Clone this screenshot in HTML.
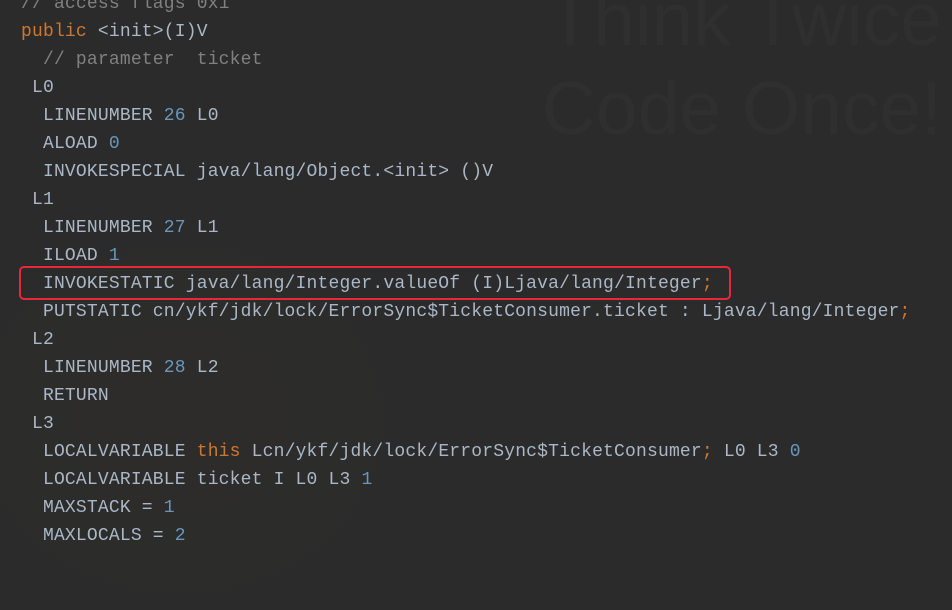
<!DOCTYPE html>
<html><head><meta charset="utf-8"><style>
html,body{margin:0;padding:0;}
body{width:952px;height:569px;background:#2b2b2b;overflow:hidden;position:relative;font-family:"Liberation Mono",monospace;}
.wm{position:absolute;right:10px;font-family:"Liberation Sans",sans-serif;font-size:75px;color:#2f2f2f;white-space:nowrap;line-height:1;}
.vase{position:absolute;left:-40px;top:230px;width:440px;height:380px;border-radius:50%;background:radial-gradient(ellipse at center,#2e2c2b 0%,#2c2c2b 50%,#2b2b2b 72%);}
pre{position:absolute;left:21px;top:-10px;margin:0;font-size:18px;letter-spacing:0.18px;line-height:28px;color:#a9b7c6;font-family:"Liberation Mono",monospace;}
.k{color:#cc7832}.n{color:#6897bb}.c{color:#808080}
.box{position:absolute;left:19px;top:266px;width:708px;height:30px;border:2px solid #e8283a;border-radius:5px;}
</style></head><body>
<div class="vase"></div>
<div class="wm" style="top:-18px">Think Twice</div>
<div class="wm" style="top:71px">Code Once!</div>
<pre><span class="c">// access flags 0x1</span>
<span class="k">public</span> &lt;init&gt;(I)V
  <span class="c">// parameter  ticket</span>
 L0
  LINENUMBER <span class="n">26</span> L0
  ALOAD <span class="n">0</span>
  INVOKESPECIAL java/lang/Object.&lt;init&gt; ()V
 L1
  LINENUMBER <span class="n">27</span> L1
  ILOAD <span class="n">1</span>
  INVOKESTATIC java/lang/Integer.valueOf (I)Ljava/lang/Integer<span class="k">;</span>
  PUTSTATIC cn/ykf/jdk/lock/ErrorSync$TicketConsumer.ticket : Ljava/lang/Integer<span class="k">;</span>
 L2
  LINENUMBER <span class="n">28</span> L2
  RETURN
 L3
  LOCALVARIABLE <span class="k">this</span> Lcn/ykf/jdk/lock/ErrorSync$TicketConsumer<span class="k">;</span> L0 L3 <span class="n">0</span>
  LOCALVARIABLE ticket I L0 L3 <span class="n">1</span>
  MAXSTACK = <span class="n">1</span>
  MAXLOCALS = <span class="n">2</span></pre>
<div class="box"></div>
</body></html>
